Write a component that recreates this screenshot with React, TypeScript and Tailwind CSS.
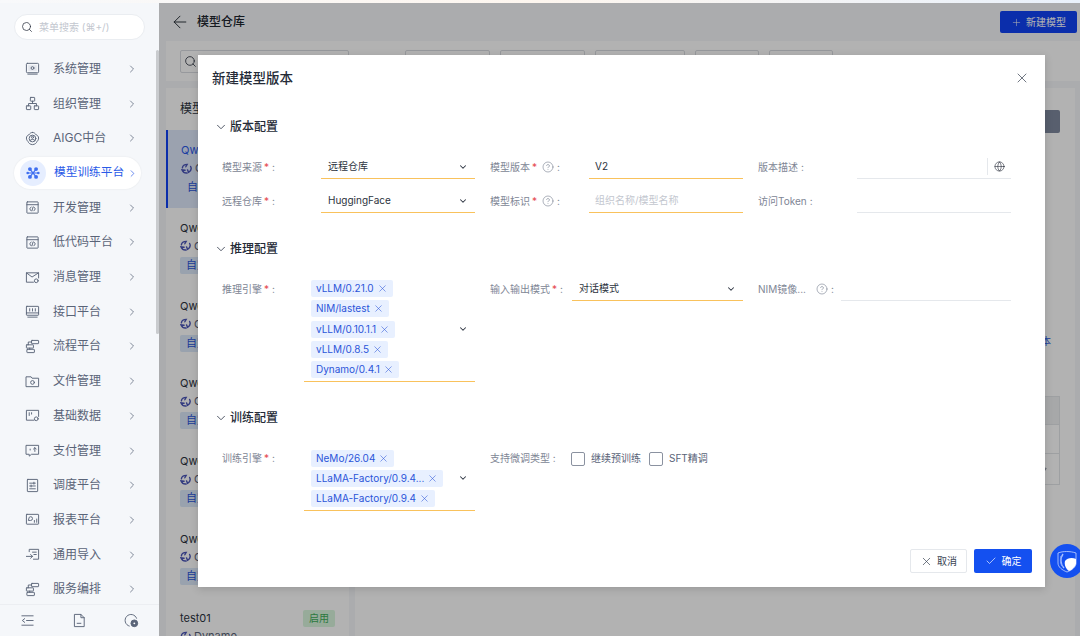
import { ReactNode } from "react";
import {
  ArrowLeft,
  Check,
  ChevronDown,
  ChevronRight,
  CircleHelp,
  Globe,
  Plus,
  Search,
  X,
} from "lucide-react";

const font = 'Inter, "Noto Sans CJK SC", sans-serif';

function Ico({ children, size = 15 }: { children: ReactNode; size?: number }) {
  return (
    <svg
      width={size}
      height={size}
      viewBox="0 0 16 16"
      fill="none"
      stroke="currentColor"
      strokeWidth="1"
      strokeLinecap="round"
      strokeLinejoin="round"
    >
      {children}
    </svg>
  );
}

const codeIcon = (
  <Ico>
    <rect x="2" y="2" width="12" height="12" rx="0.5" />
    <path d="M2 5h12M6.5 7.5 5 9.5l1.5 2M9.5 7.5l1.5 2-1.500 2M8.600 7.500l-1.200 4" />
  </Ico>
);

const flowIcon = (
  <Ico>
    <rect x="7" y="1.5" width="7.5" height="3.5" rx="0.5" />
    <rect x="1.5" y="6.2" width="7.5" height="3.5" rx="0.5" />
    <rect x="2" y="11" width="8" height="3.5" rx="0.5" />
    <path d="M7 3.2H3.500v3M5 9.700v1.300" />
  </Ico>
);

const menus: { label: string; icon: ReactNode; active?: boolean }[] = [
  {
    label: "系统管理",
    icon: (
      <Ico>
        <rect x="1.500" y="2.500" width="13" height="10" rx="1" />
        <rect x="3.500" y="4.500" width="9" height="6" fill="#e3e6ec" stroke="none" />
        <circle cx="8" cy="7.500" r="1.500" />
        <path d="M3 14h10" />
      </Ico>
    ),
  },
  {
    label: "组织管理",
    icon: (
      <Ico>
        <rect x="5.700" y="1.500" width="4.600" height="4" rx="0.500" />
        <rect x="1.500" y="10.500" width="4.600" height="4" rx="0.500" />
        <rect x="9.900" y="10.500" width="4.600" height="4" rx="0.500" />
        <path d="M8 5.500V8M3.800 10.500V8h8.400v2.500" />
      </Ico>
    ),
  },
  {
    label: "AIGC中台",
    icon: (
      <Ico>
        <path d="M8 1.500c2 0 3 1.300 3.600 2.400 1.300.4 2.900 1.600 2.900 3.600 0 1.700-.9 3-1.700 3.700-.4 1.500-2.300 3.300-4.800 3.300s-4.400-1.800-4.800-3.300C2.400 10.500 1.500 9.200 1.500 7.500c0-2 1.600-3.200 2.900-3.600C5 2.800 6 1.500 8 1.500Z" />
        <circle cx="8" cy="8" r="3.600" />
        <circle cx="8" cy="6.700" r="1.100" />
        <path d="M5.500 10c1-1.500 4-1.500 5 0" />
      </Ico>
    ),
  },
  {
    label: "模型训练平台",
    active: true,
    icon: (
      <svg width="14" height="14" viewBox="0 0 16 16" fill="#3f6ff0">
        <circle cx="4.500" cy="3.500" r="2.200" />
        <circle cx="11.500" cy="3.500" r="2.200" />
        <circle cx="4.500" cy="12.500" r="2.200" />
        <circle cx="11.500" cy="12.500" r="2.200" />
        <circle cx="1.900" cy="8" r="1.500" />
        <circle cx="14.100" cy="8" r="1.500" />
        <path d="M4.500 3.500l7 9M11.500 3.500l-7 9M2 8h12" stroke="#3f6ff0" strokeWidth="1.300" />
      </svg>
    ),
  },
  { label: "开发管理", icon: codeIcon },
  { label: "低代码平台", icon: codeIcon },
  {
    label: "消息管理",
    icon: (
      <Ico>
        <path d="M9 13H1.500V3h13v5.500" />
        <path d="m1.500 3 6 4.500L14.500 3" />
        <circle cx="12" cy="11.500" r="2" />
      </Ico>
    ),
  },
  {
    label: "接口平台",
    icon: (
      <Ico>
        <rect x="1.500" y="2.500" width="13" height="9.500" rx="0.500" />
        <path d="M1.500 9.500h13M5 5v2.500M8 5v2.500M11 5v2.500M3 14h10" />
      </Ico>
    ),
  },
  { label: "流程平台", icon: flowIcon },
  {
    label: "文件管理",
    icon: (
      <Ico>
        <path d="M1.500 3h5l1 1.500h7V13.500h-13Z" />
        <circle cx="8" cy="9" r="2" />
      </Ico>
    ),
  },
  {
    label: "基础数据",
    icon: (
      <Ico>
        <path d="M9.500 13H1.500V2.500h13V9" />
        <path d="M4.500 5v3M7 5v1.500" />
        <circle cx="12" cy="11.500" r="2" />
      </Ico>
    ),
  },
  {
    label: "支付管理",
    icon: (
      <Ico>
        <path d="M1.500 2.500h13v9.500H7l-2.500 2v-2h-3Z" />
        <path d="M5.500 6.500v1M10.500 9V5M9 6.500 10.500 5 12 6.500" />
      </Ico>
    ),
  },
  {
    label: "调度平台",
    icon: (
      <Ico>
        <rect x="2.500" y="1.500" width="11" height="13" rx="0.500" />
        <path d="M5 5.500h6M5 8.500h6M5 11.500h6M9.500 4.500v2M6.500 7.500v2" />
      </Ico>
    ),
  },
  {
    label: "报表平台",
    icon: (
      <Ico>
        <rect x="1.500" y="2.500" width="13" height="10.500" rx="0.500" />
        <path d="M4 7a2 2 0 1 1 2 2H4ZM10 11V9M12.500 11V7.500" />
      </Ico>
    ),
  },
  {
    label: "通用导入",
    icon: (
      <Ico>
        <path d="M4.500 5V2.500h10v10.500H9" />
        <path d="M8 5.500h4M9.500 8H12M1.500 10H8M6 8l2 2-2 2" />
      </Ico>
    ),
  },
  { label: "服务编排", icon: flowIcon },
];

const models = ["Qwe", "Qwe", "Qwe", "Qwe", "Qwe", "Qwe"];

function Swirl() {
  return (
    <svg width="11" height="11" viewBox="0 0 16 16" fill="none" stroke="#4a55b8" strokeWidth="2" strokeLinecap="round">
      <path d="M2 7c.5-3 3-5 7-5l-2 3.500" />
      <path d="M14 5c1.500 3 .5 6.500-3 8.500L9.500 10" />
      <path d="M9 14.500c-3.500.5-6-1-7.500-4.500l4.500.5" />
    </svg>
  );
}

function Req() {
  return <span className="text-[#e5484d] ml-[2px]">*</span>;
}

function Field({
  label,
  width,
  required,
  help,
  helpGap = "ml-[5px]",
  children,
}: {
  label: string;
  width: string;
  required?: boolean;
  help?: boolean;
  helpGap?: string;
  children: ReactNode;
}) {
  return (
    <div className="flex items-start">
      <div className={`${width} h-[24px] shrink-0 flex items-center text-[10px] text-[#808695]`}>
        <span className="truncate">{label}</span>
        {required && <Req />}
        {help && <CircleHelp size={12} strokeWidth={1} className={`${helpGap} text-[#5a6478]`} />}
        <span className="ml-[3px]">:</span>
      </div>
      {children}
    </div>
  );
}

function Select({ value }: { value: string }) {
  return (
    <div className="flex-1 h-[24px] flex items-center justify-between pl-[7px] pr-[7px] text-[10px] text-[#2c3340] border-b border-[#f9c25c]">
      <span>{value}</span>
      <ChevronDown size={10} strokeWidth={2.500} className="text-[#2c3340]" />
    </div>
  );
}

function Input({
  value,
  placeholder,
  warn,
  children,
}: {
  value?: string;
  placeholder?: string;
  warn?: boolean;
  children?: ReactNode;
}) {
  return (
    <div
      className={`flex-1 h-[24px] flex items-center justify-between px-[6px] text-[10px] border-b ${warn ? "border-[#f9c25c]" : "border-[#e5e8ec]"}`}
    >
      {value && <span className="text-[#2c3340]">{value}</span>}
      {placeholder && <span className="text-[#c3c7cf]">{placeholder}</span>}
      {children}
    </div>
  );
}

function TagSelect({ tags }: { tags: string[] }) {
  return (
    <div className="flex-1 flex items-center justify-between pl-[7px] pr-[7px] pt-[3px] pb-[2.500px] border-b border-[#f9c25c]">
      <div className="flex flex-col items-start gap-[3.300px]">
        {tags.map((t, i) => (
          <div
            key={i}
            className="h-[17px] flex items-center gap-[3px] pl-[5px] pr-[5px] rounded-[2px] bg-[#e8f0ff] text-[10px] text-[#2b55d9]"
          >
            <span>{t}</span>
            <X size={11} strokeWidth={1.200} className="text-[#2b55d9]" />
          </div>
        ))}
      </div>
      <ChevronDown size={10} strokeWidth={2.500} className="text-[#2c3340]" />
    </div>
  );
}

function SectionHead({ title }: { title: string }) {
  return (
    <div className="h-[20px] flex items-center gap-[2px] text-[12px] font-medium text-[#252b37]">
      <ChevronDown size={14} strokeWidth={1.500} className="text-[#3b4454]" />
      <span>{title}</span>
    </div>
  );
}

function Sidebar() {
  return (
    <aside className="relative w-[159px] shrink-0 bg-[#f5f7fa] flex flex-col">
      <div className="mx-[14px] mt-[11px] mb-[11.600px] h-[26px] rounded-full bg-white border border-[#eaedf1] flex items-center pl-[6px] gap-[6px]">
        <Search size={12} strokeWidth={1.500} className="text-[#2c3340]" />
        <span className="text-[10px] text-[#c3c7cf]">菜单搜索 (⌘+/)</span>
      </div>
      <div className="flex-1 overflow-hidden">
        {menus.map((m) => (
          <div key={m.label} className="h-[34.700px] flex items-center">
            {m.active ? (
              <div className="ml-[14px] w-[127px] h-[32px] rounded-full bg-white shadow-[0_0_2px_rgba(0,0,0,0.08)] flex items-center pl-[6px] text-[#2a5ae8]">
                <div className="w-[26px] h-[26px] rounded-full bg-[#e6eeff] flex items-center justify-center">
                  {m.icon}
                </div>
                <span className="ml-[8px] text-[11.700px] whitespace-nowrap">{m.label}</span>
                <ChevronRight size={11} strokeWidth={1.500} className="ml-auto mr-[3px]" />
              </div>
            ) : (
              <div className="flex items-center w-full pl-[25px] text-[#5a6478]">
                <span className="w-[28px] shrink-0">{m.icon}</span>
                <span className="text-[12px] whitespace-nowrap">{m.label}</span>
                <ChevronRight size={12} strokeWidth={1.500} className="ml-auto mr-[21px]" />
              </div>
            )}
          </div>
        ))}
      </div>
      <div className="h-[32px] shrink-0 border-t border-[#eceef2] flex items-center text-[#5a6478]">
        <div className="w-full flex items-center justify-between pl-[20px] pr-[20px]">
          <Ico>
            <path d="M2 3h12M7 8h7M2 13h12M5 6 2.500 8 5 10" />
          </Ico>
          <Ico>
            <path d="M3 1.500h6.500L13 5v9.500H3Z" />
            <path d="M9.500 1.500V5H13M5.500 11h4" />
          </Ico>
          <svg width="15" height="15" viewBox="0 0 16 16" fill="none" stroke="currentColor">
            <path d="M13.500 6A6.300 6.300 0 1 0 6 14" />
            <circle cx="11" cy="11" r="3.600" fill="currentColor" />
            <circle cx="11" cy="11" r="1" fill="#fff" stroke="none" />
          </svg>
        </div>
      </div>
      <div className="absolute right-0 top-[47px] w-[3px] h-[284px] rounded-[2px] bg-[#c9cbce]" />
    </aside>
  );
}

function Page() {
  return (
    <main className="flex-1 min-w-0 bg-[#f5f7fa] flex flex-col">
      <header className="h-[38px] shrink-0 flex items-center justify-between pl-[11px] pr-[3px] text-[#20262f]">
        <div className="flex items-center gap-[7px]">
          <ArrowLeft size={20} strokeWidth={1.100} />
          <span className="text-[12px] font-medium">模型仓库</span>
        </div>
        <button className="w-[77px] h-[22px] rounded-[2px] bg-[#1043f5] text-white text-[10px] flex items-center justify-center gap-[4px]">
          <Plus size={11} strokeWidth={1.200} />
          新建模型
        </button>
      </header>
      <div className="ml-[7px] h-[40px] shrink-0 bg-white flex items-center pl-[14px] gap-[10px]">
        <div className="w-[169px] h-[23px] border border-[#d9dce1] rounded-[2px] flex items-center pl-[3px] mr-[46px]">
          <Search size={13} strokeWidth={1.500} className="text-[#2c3340]" />
        </div>
        <div className="w-[85px] h-[23px] border border-[#d9dce1] rounded-[2px]" />
        <div className="w-[85px] h-[23px] border border-[#d9dce1] rounded-[2px]" />
        <div className="w-[90px] h-[23px] border border-[#d9dce1] rounded-[2px]" />
        <div className="w-[64px] h-[23px] border border-[#d9dce1] rounded-[2px]" />
        <div className="w-[64px] h-[23px] border border-[#d9dce1] rounded-[2px]" />
      </div>
      <div className="flex-1 min-h-0 ml-[7px] mt-[7px] flex gap-[6px] overflow-hidden">
        <div className="w-[183px] shrink-0 bg-white">
          <div className="h-[42px] flex items-center pl-[14px] text-[12px] text-[#2c3340]">模型列表</div>
          {models.map((m, i) => (
            <div
              key={i}
              className={`h-[77.800px] pt-[13px] text-[11px] ${i === 0 ? "pl-[13px] bg-[#dfe8fb] border-l-2 border-[#1043f5] text-[#2a5ae8]" : "pl-[14px] text-[#2c3340]"}`}
            >
              <div className="leading-[14px]">{m}</div>
              <div className="flex items-center gap-[3px] mt-[4px] leading-[14px] text-[#5a6478]">
                <Swirl />G
              </div>
              <span className={`inline-block mt-[4px] h-[17px] leading-[17px] rounded-[2px] text-[#2b55d9] ${i === 0 ? "px-[6px]" : "px-[6px] bg-[#dbe8fa]"}`}>
                自定义模型
              </span>
            </div>
          ))}
          <div className="pl-[14px] pr-[14px] pt-[13px] text-[11px] text-[#2c3340]">
            <div className="flex items-center justify-between">
              <span>test01</span>
              <span className="w-[32px] h-[17px] rounded-[2px] bg-[#d9f5dd] text-[#3fae5a] text-[10px] flex items-center justify-center">
                启用
              </span>
            </div>
            <div className="flex items-center gap-[3px] mt-[1px] text-[#5a6478]">
              <Swirl />
              Dynamo
            </div>
          </div>
        </div>
        <div className="flex-1 bg-white mr-[5px] pr-[15px] pt-[22px] flex flex-col items-end">
          <div className="w-[60px] h-[23px] rounded-[2px] bg-[#7e889e]" />
          <div className="mt-[201px] mr-[9px] text-[10px] text-[#2b55d9]">版本</div>
          <div className="mt-[47px] w-[200px] border border-[#e3e5e8]">
            <div className="h-[28px] bg-[#f0f1f3] border-b border-[#e3e5e8]" />
            <div className="h-[29px] border-b border-[#e3e5e8]" />
            <div className="h-[30px] flex items-center justify-end pr-[9px] text-[#5a6478]">
              <ChevronRight size={10} />
            </div>
          </div>
        </div>
      </div>
    </main>
  );
}

function Modal() {
  return (
    <div className="absolute left-[198px] top-[55px] w-[847px] h-[532px] bg-white shadow-[0_2px_8px_rgba(0,0,0,0.15)] flex flex-col">
      <div className="h-[46px] shrink-0 flex items-center justify-between pl-[14px] pr-[15px]">
        <span className="text-[13.500px] font-medium text-[#252b37]">新建模型版本</span>
        <X size={16} strokeWidth={1.100} className="text-[#3b4454]" />
      </div>
      <div className="pl-[16px] pt-[16px]">
        <SectionHead title="版本配置" />
        <div className="ml-[8px] mt-[18px] grid grid-cols-[253px_253px_253px] gap-x-[15px] gap-y-[10px]">
          <Field label="模型来源" width="w-[99px]" required>
            <Select value="远程仓库" />
          </Field>
          <Field label="模型版本" width="w-[99px]" required help>
            <Input value="V2" warn />
          </Field>
          <Field label="版本描述" width="w-[99px]">
            <Input>
              <span className="ml-auto pl-[6px] border-l border-[#e5e8ec] h-[17px] flex items-center">
                <Globe size={11} strokeWidth={1.300} className="text-[#252b37]" />
              </span>
            </Input>
          </Field>
          <Field label="远程仓库" width="w-[99px]" required>
            <Select value="HuggingFace" />
          </Field>
          <Field label="模型标识" width="w-[99px]" required help>
            <Input placeholder="组织名称/模型名称" warn />
          </Field>
          <Field label="访问Token" width="w-[99px]">
            <Input />
          </Field>
        </div>

        <div className="mt-[26px]">
          <SectionHead title="推理配置" />
        </div>
        <div className="ml-[8px] mt-[18px] grid grid-cols-[253px_253px_253px] gap-x-[15px]">
          <Field label="推理引擎" width="w-[82px]" required>
            <TagSelect tags={["vLLM/0.21.0", "NIM/lastest", "vLLM/0.10.1.1", "vLLM/0.8.5", "Dynamo/0.4.1"]} />
          </Field>
          <Field label="输入输出模式" width="w-[82px]" required>
            <Select value="对话模式" />
          </Field>
          <Field label="NIM镜像..." width="w-[83px]" help helpGap="ml-[10px]">
            <Input />
          </Field>
        </div>

        <div className="mt-[26px]">
          <SectionHead title="训练配置" />
        </div>
        <div className="ml-[8px] mt-[19px] grid grid-cols-[253px_253px_253px] gap-x-[15px]">
          <Field label="训练引擎" width="w-[82px]" required>
            <TagSelect tags={["NeMo/26.04", "LLaMA-Factory/0.9.4...", "LLaMA-Factory/0.9.4"]} />
          </Field>
          <div className="h-[24px] flex items-center text-[10px]">
            <span className="w-[81px] text-[#808695]">支持微调类型 :</span>
            <span className="w-[14px] h-[14px] rounded-[2px] border border-[#8b92a0]" />
            <span className="ml-[6px] w-[58px] text-[#5a6478]">继续预训练</span>
            <span className="w-[14px] h-[14px] rounded-[2px] border border-[#8b92a0]" />
            <span className="ml-[6px] text-[#5a6478]">SFT精调</span>
          </div>
        </div>
      </div>
      <div className="mt-auto pb-[14px] pr-[13px] flex justify-end gap-[7px]">
        <button className="w-[57px] h-[24px] rounded-[2px] border border-[#e5e8ec] bg-white text-[10px] text-[#3b4454] flex items-center justify-center gap-[4px]">
          <X size={13} strokeWidth={1.300} />
          取消
        </button>
        <button className="w-[58px] h-[24px] rounded-[2px] bg-[#1450f0] text-[10px] text-white flex items-center justify-center gap-[5px]">
          <Check size={12} strokeWidth={1.300} />
          确定
        </button>
      </div>
    </div>
  );
}

export default function App() {
  return (
    <div className="relative w-[1080px] h-[636px] overflow-hidden flex flex-col" style={{ fontFamily: font }}>
      <div className="h-[3px] shrink-0 bg-gradient-to-r from-[#f8f9fb] via-[#fdf6ef] to-[#e9f1fb]" />
      <div className="flex-1 min-h-0 flex">
        <Sidebar />
        <Page />
      </div>
      <div className="absolute left-[159px] right-0 top-[3px] bottom-0 bg-black/30" />
      <Modal />
      <div className="absolute left-[1050px] top-[544px] w-[34px] h-[34px] rounded-full bg-[#1450f0] flex items-center justify-center">
        <svg width="24" height="24" viewBox="0 0 24 24" fill="none">
          <path d="M3 4c5-2 12-2 18 0v10c0 4-4 7-9 9-5-2-9-5-9-9Z" stroke="#c7d6ff" strokeWidth="0.800" />
          <path d="M8 5c-3 4-3 10 1 14" stroke="#a9c1ff" strokeWidth="1.500" />
          <path d="M6 7c-1 4-1 8 2 11" stroke="#7fa2ff" strokeWidth="1" />
          <path d="M10 12c2-3 7-4 11-2v5c-1 3-4 6-7 7-3-2-5-6-4-10Z" fill="#fff" />
        </svg>
      </div>
    </div>
  );
}
